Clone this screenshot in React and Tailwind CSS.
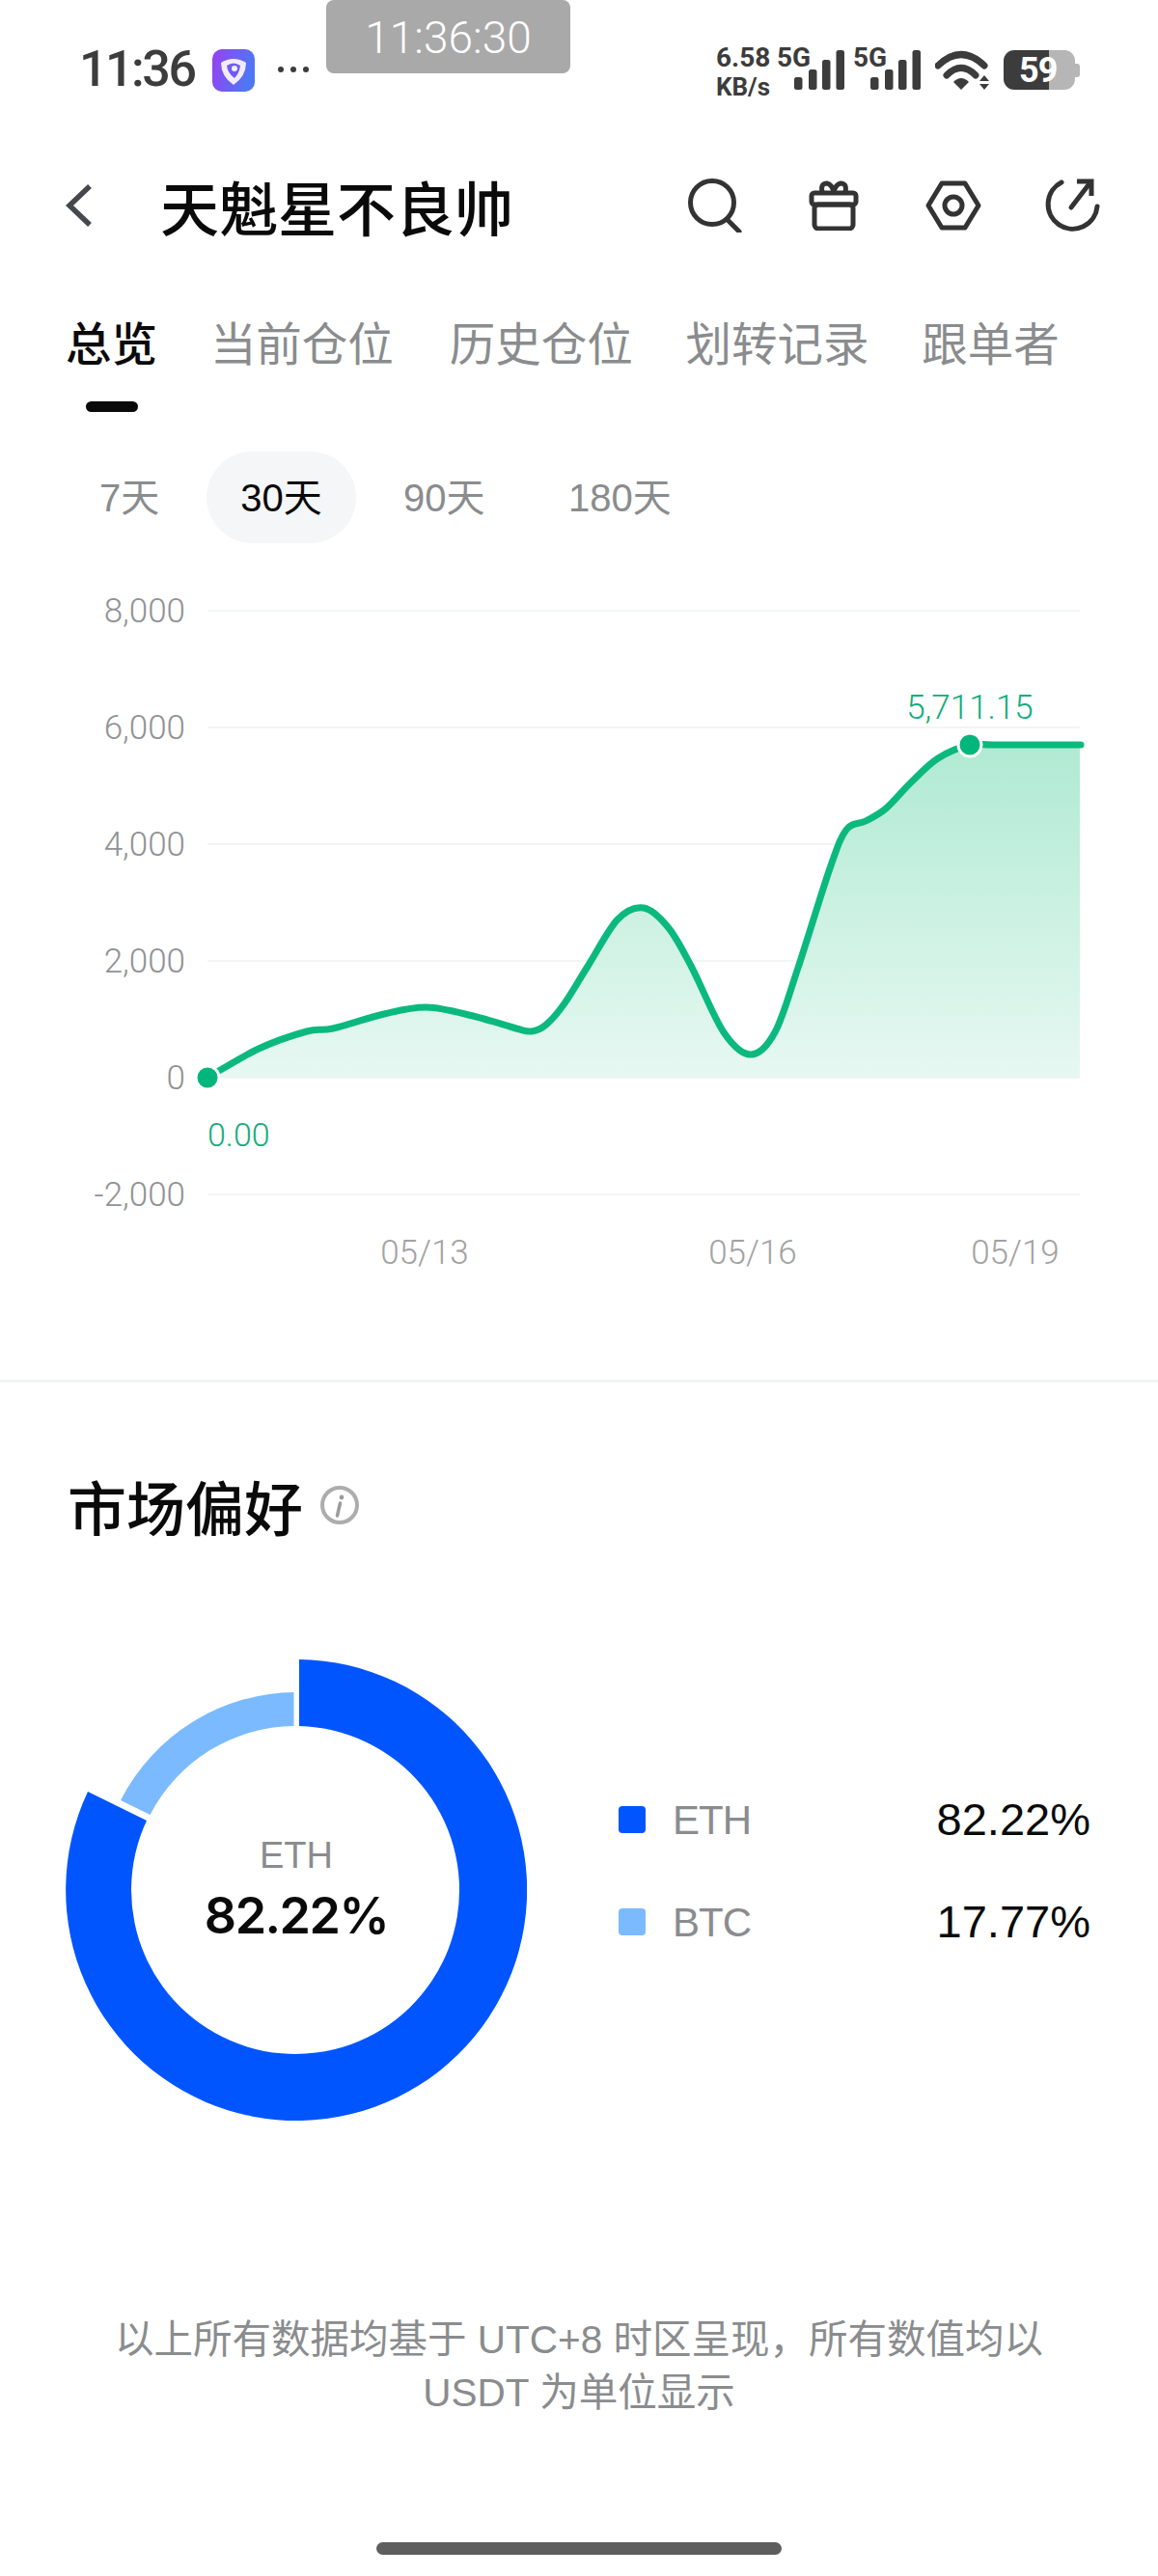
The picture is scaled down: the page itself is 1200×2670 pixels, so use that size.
const cjk = "font-['Noto_Sans_CJK_SC',sans-serif]";
const roboto = "font-['Roboto','Noto_Sans_CJK_SC',sans-serif]";
const helv = "font-['Liberation_Sans','Noto_Sans_CJK_SC',sans-serif]";

const tabs = ['总览', '当前仓位', '历史仓位', '划转记录', '跟单者'];

const curve = [
  [215, 1117], [268, 1087], [318, 1069], [345, 1066], [398, 1051], [442, 1044], [490, 1053], [535, 1066],
  [551, 1069], [566, 1062], [585, 1040], [610, 1000], [640, 953], [667, 941], [693, 962], [717, 1003],
  [750, 1070], [778, 1093], [803, 1070], [827, 1003], [860, 900], [877, 860], [897, 851], [918, 838],
  [944, 811], [972, 786], [1005, 772], [1030, 772], [1120, 772],
];

// catmull-rom through the points, turned into beziers
const smooth = (pts) => {
  let d = `M${pts[0][0]} ${pts[0][1]}`;
  for (let i = 0; i < pts.length - 1; i++) {
    const p0 = pts[i - 1] || pts[i];
    const p1 = pts[i];
    const p2 = pts[i + 1];
    const p3 = pts[i + 2] || p2;
    const c1x = p1[0] + (p2[0] - p0[0]) / 6;
    const c1y = p1[1] + (p2[1] - p0[1]) / 6;
    const c2x = p2[0] - (p3[0] - p1[0]) / 6;
    const c2y = p2[1] - (p3[1] - p1[1]) / 6;
    d += ` C${c1x.toFixed(1)} ${c1y.toFixed(1)} ${c2x.toFixed(1)} ${c2y.toFixed(1)} ${p2[0]} ${p2[1]}`;
  }
  return d;
};

const StatusBars = () => (
  <svg width="52" height="41" viewBox="0 0 52 41" className="block" fill="#3c3c3c">
    <rect x="0" y="28" width="8.5" height="13" rx="2.5" />
    <rect x="15" y="20" width="8.5" height="21" rx="2.5" />
    <rect x="29" y="10" width="8.5" height="31" rx="2.5" />
    <rect x="43.5" y="0" width="8.5" height="41" rx="2.5" />
  </svg>
);

const StatusBar = () => (
  <div className="relative h-[122px] flex items-start pl-[82px] pr-[81px] pt-[47px]">
    <div className={`${roboto} w-[138px] h-[50px] flex items-center text-[52px] font-medium tracking-[-2.5px] text-[#3c3c3c] leading-none`}>11:36</div>
    <svg width="44" height="44" viewBox="0 0 44 44" className="mt-[4px] shrink-0">
      <defs>
        <linearGradient id="appIcon" x1="0" y1="0" x2="1" y2="0.3">
          <stop offset="0" stopColor="#9a3ff0" />
          <stop offset="1" stopColor="#4c78f5" />
        </linearGradient>
      </defs>
      <rect width="44" height="44" rx="10" fill="url(#appIcon)" />
      <path d="M9 14 Q22 6 35 14 Q35 28 22 37 Q9 28 9 14Z" fill="#f3ecff" />
      <path d="M15 17 Q22 12 29 17 Q28 25 23 30 Q16 25 15 17Z" fill="#6f5bf2" />
      <circle cx="23" cy="20" r="3" fill="#f3ecff" />
    </svg>
    <div className="ml-[24px] mt-[22px] flex gap-[7px]">
      <span className="w-[6px] h-[6px] rounded-full bg-[#3c3c3c]" />
      <span className="w-[6px] h-[6px] rounded-full bg-[#3c3c3c]" />
      <span className="w-[6px] h-[6px] rounded-full bg-[#3c3c3c]" />
    </div>

    <div className="ml-auto flex items-start text-[#3c3c3c]">
      <div className={`${roboto} font-bold text-[28px] leading-[30px] mt-[-2px] w-[63px]`}>
        <div>6.58</div>
        <div className="text-[26px]">KB/s</div>
      </div>
      <div className={`${roboto} font-bold text-[28px] leading-[30px] mt-[-2px] w-[18px] whitespace-nowrap`}>5G</div>
      <div className="mt-[5px]"><StatusBars /></div>
      <div className={`${roboto} font-bold text-[28px] leading-[30px] mt-[-2px] ml-[9px] w-[18px] whitespace-nowrap`}>5G</div>
      <div className="mt-[5px]"><StatusBars /></div>
      <svg width="58" height="42" viewBox="0 0 58 42" className="ml-[15px] mt-[5px]">
        <path d="M3 16 Q27 -7 51 16" fill="none" stroke="#3c3c3c" strokeWidth="7" strokeLinecap="round" />
        <path d="M12 26 Q27 11 42 26" fill="none" stroke="#3c3c3c" strokeWidth="7" strokeLinecap="round" />
        <path d="M19 33 Q27 25 35 33 L27 41Z" fill="#3c3c3c" />
        <path d="M51 26 L56 32 H46Z M46 35 H56 L51 41Z" fill="#3c3c3c" />
      </svg>
      <div className="relative ml-[13px] mt-[5px] h-[41px] w-[79px] flex">
        <div className="w-[47px] bg-[#3c3c3c] rounded-l-[11px]" />
        <div className="w-[27px] bg-[#b6b6b6] rounded-r-[11px]" />
        <div className="w-[5px] h-[14px] mt-[14px] bg-[#b6b6b6] rounded-r-[3px]" />
        <span className={`${roboto} absolute left-[16px] top-[2px] text-[36px] leading-[38px] font-bold text-white tracking-[-1px]`}>59</span>
      </div>
    </div>

    <div className="absolute left-[338px] top-0 w-[253px] h-[76px] bg-[#a9a9a9] rounded-[8px] flex items-center justify-center">
      <span className={`${roboto} text-[46px] font-light text-white leading-none mt-[2px]`}>11:36:30</span>
    </div>
  </div>
);

const NavBar = () => (
  <div className="h-[70px] mt-[56px] flex items-center pl-[68px] pr-[60px] relative">
    <svg width="27" height="44" viewBox="0 0 27 44" fill="none" stroke="#46484d" strokeWidth="5.5">
      <path d="M25 2 L4 22 L25 42" />
    </svg>
    <h1 className={`${cjk} ml-[71px] text-[61px] font-medium text-[#0a0a0a] leading-none`}>天魁星不良帅</h1>
    <div className="ml-auto flex items-center text-[#333]">
      <svg width="56" height="56" viewBox="0 0 56 56" fill="none" stroke="#333" strokeWidth="5">
        <circle cx="25" cy="25" r="22.5" />
        <path d="M41 43 L53 55" strokeLinecap="round" />
      </svg>
      <svg width="52" height="52" viewBox="0 0 52 52" fill="none" stroke="#333" strokeWidth="5" strokeLinejoin="round" className="ml-[69px]">
        <rect x="3" y="13" width="46" height="12" rx="3" />
        <rect x="6" y="25" width="40" height="25" rx="4" />
        <path d="M14 12 Q12 3 19 3 Q24 4 26 12 Q28 4 33 3 Q40 3 38 12" />
      </svg>
      <svg width="58" height="52" viewBox="0 0 58 52" fill="none" stroke="#333" strokeWidth="5" strokeLinejoin="round" className="ml-[69px]">
        <path d="M17 3 H41 L55 26 L41 49 H17 L3 26Z" />
        <circle cx="29" cy="26" r="9" />
      </svg>
      <svg width="57" height="56" viewBox="0 0 57 56" fill="none" stroke="#333" strokeWidth="5" strokeLinecap="round" className="ml-[66px]">
        <path d="M17 4 A25.5 25.5 0 1 0 54 29" />
        <path d="M27 30 L47 4" />
        <path d="M33 3 H48 V18" strokeLinecap="butt" />
      </svg>
    </div>
  </div>
);

const Tabs = () => (
  <div className={`${cjk} mt-[78px] flex pl-[68px] text-[47.5px] leading-[56px] text-[#8a8c8e]`}>
    {tabs.map((t, i) => (
      <div key={t} className={i === 0 ? 'relative w-[150px]' : i === 1 ? 'w-[248px]' : 'w-[245px]'}>
        {i === 0 ? <span className="font-medium text-[#0a0a0a]">{t}</span> : t}
        {i === 0 && <div className="absolute left-[21px] top-[90px] w-[54px] h-[11px] rounded-full bg-[#0a0a0a]" />}
      </div>
    ))}
  </div>
);

const Ranges = () => (
  <div className={`${helv} mt-[86px] flex pl-[103px] items-center text-[40px] text-[#8a8c8e] h-[95px]`}>
    <span className="w-[111px]">7天</span>
    <span className="w-[155px] h-[95px] rounded-full bg-[#f5f6f7] text-[#0a0a0a] flex items-center justify-center">30天</span>
    <span className="ml-[49px] w-[171px]">90天</span>
    <span>180天</span>
  </div>
);

const yLabels = [['8,000', 633], ['6,000', 754], ['4,000', 875], ['2,000', 996], ['0', 1117], ['-2,000', 1238]];
const xLabels = [['05/13', 440], ['05/16', 780], ['05/19', 1052]];

const Chart = () => {
  const line = smooth(curve);
  const area = `${smooth(curve.slice(0, -1).concat([[1119, 772]]))} L1119 1117 L215 1117 Z`;
  return (
    <svg width="1200" height="760" viewBox="0 600 1200 760" className="block mt-[37px]">
      <defs>
        <linearGradient id="areaFill" x1="0" y1="772" x2="0" y2="1117" gradientUnits="userSpaceOnUse">
          <stop offset="0" stopColor="#b0ead3" />
          <stop offset="1" stopColor="#e7f8f2" />
        </linearGradient>
      </defs>
      {yLabels.map(([t, y]) => (
        <g key={t}>
          <line x1="215" x2="1119" y1={y} y2={y} stroke="#f3f4f5" strokeWidth="2" />
          <text x="192" y={y + 12} textAnchor="end" fill="#909295" fontSize="35" fontWeight="300" className={roboto}>{t}</text>
        </g>
      ))}
      <path d={area} fill="url(#areaFill)" />
      <path d={line} fill="none" stroke="#0bb97f" strokeWidth="7" strokeLinecap="round" />
      <circle cx="215" cy="1117" r="12" fill="#00b67a" stroke="#fff" strokeWidth="3" />
      <circle cx="1005" cy="772" r="12" fill="#00b67a" stroke="#fff" strokeWidth="3" />
      <text x="1005" y="745" textAnchor="middle" fill="#12ac7a" fontSize="35" fontWeight="300" className={roboto}>5,711.15</text>
      <text x="215" y="1188" fill="#12ac7a" fontSize="34" fontWeight="300" className={roboto}>0.00</text>
      {xLabels.map(([t, x]) => (
        <text key={t} x={x} y="1310" textAnchor="middle" fill="#a2a2a2" fontSize="35" fontWeight="300" className={roboto}>{t}</text>
      ))}
    </svg>
  );
};

const Donut = () => (
  <div className="relative w-[478px] h-[478px] shrink-0">
    <svg width="478" height="478" viewBox="0 0 478 478">
      <path d="M242 0 A239 239 0 1 1 23 137 L84 167 A170 170 0 1 0 242 69 Z" fill="#0055fe" />
      <path d="M236.5 34 A205 205 0 0 0 57 146 L87.5 161 A170 170 0 0 1 236.5 69 Z" fill="#7cbaff" />
    </svg>
    <div className="absolute inset-0 flex flex-col items-center">
      <div className={`${helv} mt-[181px] text-[38px] leading-[44px] text-[#8a8c8e]`}>ETH</div>
      <div className="font-['Inter',sans-serif] mt-[11px] text-[52px] leading-[60px] font-semibold text-[#0a0a0a] tracking-[-1.5px]">82.22%</div>
    </div>
  </div>
);

const Legend = ({ color, name, value }) => (
  <div className="flex items-center h-[44px]">
    <span className={`w-[28px] h-[28px] rounded-[4px] ${color}`} />
    <span className={`${helv} ml-[28px] text-[42px] text-[#8a8c8e] tracking-[-1px]`}>{name}</span>
    <span className={`${helv} ml-auto text-[47px] text-[#0a0a0a]`}>{value}</span>
  </div>
);

export default function App() {
  return (
    <div className="w-[1200px] h-[2670px] bg-white overflow-hidden flex flex-col">
      <StatusBar />
      <NavBar />
      <Tabs />
      <Ranges />
      <Chart />
      <div className="h-[3px] bg-[#f3f4f5] mt-[70px]" />

      <div className="mt-[95px] pl-[70px] flex items-center h-[64px]">
        <h2 className={`${cjk} text-[61px] font-medium text-[#0a0a0a] leading-none`}>市场偏好</h2>
        <svg width="40" height="40" viewBox="0 0 40 40" className="ml-[18px]" fill="none">
          <circle cx="20" cy="20" r="18" stroke="#adadad" strokeWidth="4" />
          <circle cx="22" cy="12" r="2.4" fill="#9a9c9e" />
          <path d="M20.5 18 L17.5 31" stroke="#9a9c9e" strokeWidth="3.5" strokeLinecap="round" />
        </svg>
      </div>

      <div className="mt-[128px] flex pl-[68px] pr-[70px]">
        <Donut />
        <div className="ml-[95px] flex-1 mt-[144px] flex flex-col gap-[62px]">
          <Legend color="bg-[#0055fe]" name="ETH" value="82.22%" />
          <Legend color="bg-[#7cbaff]" name="BTC" value="17.77%" />
        </div>
      </div>

      <p className={`${helv} mt-[200px] text-center text-[40.5px] leading-[55px] text-[#8a8c8e]`}>
        以上所有数据均基于 UTC+8 时区呈现，所有数值均以<br />USDT 为单位显示
      </p>

      <div className="mt-auto mb-[22px] mx-auto w-[420px] h-[13px] rounded-full bg-[#5e5e5e]" />
    </div>
  );
}
